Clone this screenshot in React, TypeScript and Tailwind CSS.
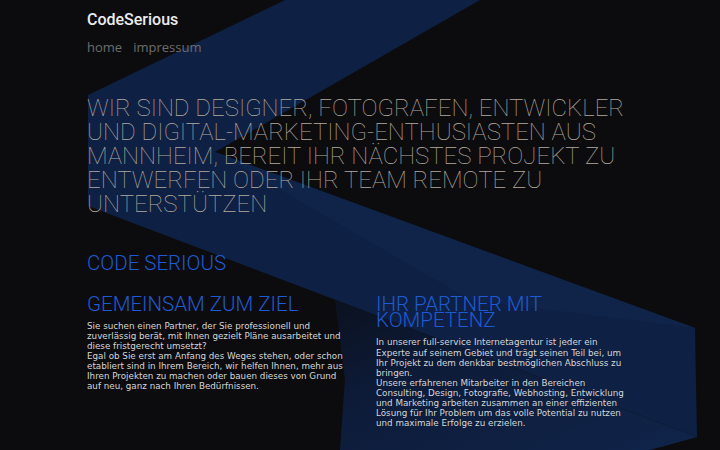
import React from "react";

function Backdrop() {
  return (
    <svg
      className="absolute inset-0 h-full w-full"
      viewBox="0 0 720 450"
      preserveAspectRatio="none"
      aria-hidden="true"
    >
      <defs>
        <linearGradient id="fold" x1="0" y1="0" x2="1" y2="1">
          <stop offset="0" stopColor="#0b111f" />
          <stop offset="0.35" stopColor="#0d1b38" />
          <stop offset="1" stopColor="#10244a" />
        </linearGradient>
      </defs>
      {/* lower folded part */}
      <polygon points="335,300 697,437 650,450 340,450 345,380" fill="url(#fold)" />
      {/* main chevron */}
      <polygon points="285,0 480,0 215,152 695,328 697,437 88,206 88,95" fill="#0e2043" />
      {/* lighter top of the lower arm */}
      <polygon points="215,152 695,328 470,300" fill="#10244a" />
    </svg>
  );
}

const heading = "font-['Roboto',sans-serif] text-[20.5px] font-light uppercase leading-[16.7px] text-[#1d5bd4]";
const body = "font-['DejaVu_Sans',sans-serif] text-[8.75px] leading-[10.1px] text-[#d6d6d6]";

export default function App() {
  return (
    <div className="relative h-[450px] w-full overflow-hidden bg-[#0c0c0e]">
      <Backdrop />

      <div className="relative mx-auto w-[546px]">
        {/* Header */}
        <header className="pt-[10px]">
          <div className="font-['Roboto',sans-serif] text-[16px] font-medium leading-[20px] text-[#ececec]">
            CodeSerious
          </div>
          <nav className="mt-[7.5px] flex gap-[11px] font-['Open_Sans',sans-serif] text-[13px] leading-[18px] text-[#6c6c6c]">
            <span>home</span>
            <span>impressum</span>
          </nav>
        </header>

        {/* Intro */}
        <h1 className="mt-[40px] font-['Roboto',sans-serif] text-[24px] font-thin uppercase leading-[24.2px] text-[#b3a99f]">
          Wir sind Designer, Fotografen, Entwickler und Digital-Marketing-Enthusiasten aus Mannheim, bereit Ihr nächstes Projekt zu entwerfen oder Ihr Team remote zu unterstützen
        </h1>

        <h2 className={`mt-[38.5px] ${heading}`}>Code Serious</h2>

        {/* Two columns */}
        <section className="mt-[24px] grid grid-cols-[258px_257px] gap-[31px]">
          <div>
            <h3 className={heading}>Gemeinsam zum Ziel</h3>
            <p className={`mt-[8.3px] ${body}`}>
              Sie suchen einen Partner, der Sie professionell und zuverlässig berät, mit Ihnen gezielt Pläne ausarbeitet und diese fristgerecht umsetzt?
              <br />
              Egal ob Sie erst am Anfang des Weges stehen, oder schon etabliert sind in Ihrem Bereich, wir helfen Ihnen, mehr aus Ihren Projekten zu machen oder bauen dieses von Grund auf neu, ganz nach Ihren Bedürfnissen.
            </p>
          </div>
          <div>
            <h3 className={heading}>Ihr Partner mit Kompetenz</h3>
            <p className={`mt-[8.3px] ${body}`}>
              In unserer full-service Internetagentur ist jeder ein Experte auf seinem Gebiet und trägt seinen Teil bei, um Ihr Projekt zu dem denkbar bestmöglichen Abschluss zu bringen.
              <br />
              Unsere erfahrenen Mitarbeiter in den Bereichen Consulting, Design, Fotografie, Webhosting, Entwicklung und Marketing arbeiten zusammen an einer effizienten Lösung für Ihr Problem um das volle Potential zu nutzen und maximale Erfolge zu erzielen.
            </p>
          </div>
        </section>

        <h2 className={`mt-[25px] ${heading}`}>Das können wir für Sie tun</h2>
      </div>
    </div>
  );
}
